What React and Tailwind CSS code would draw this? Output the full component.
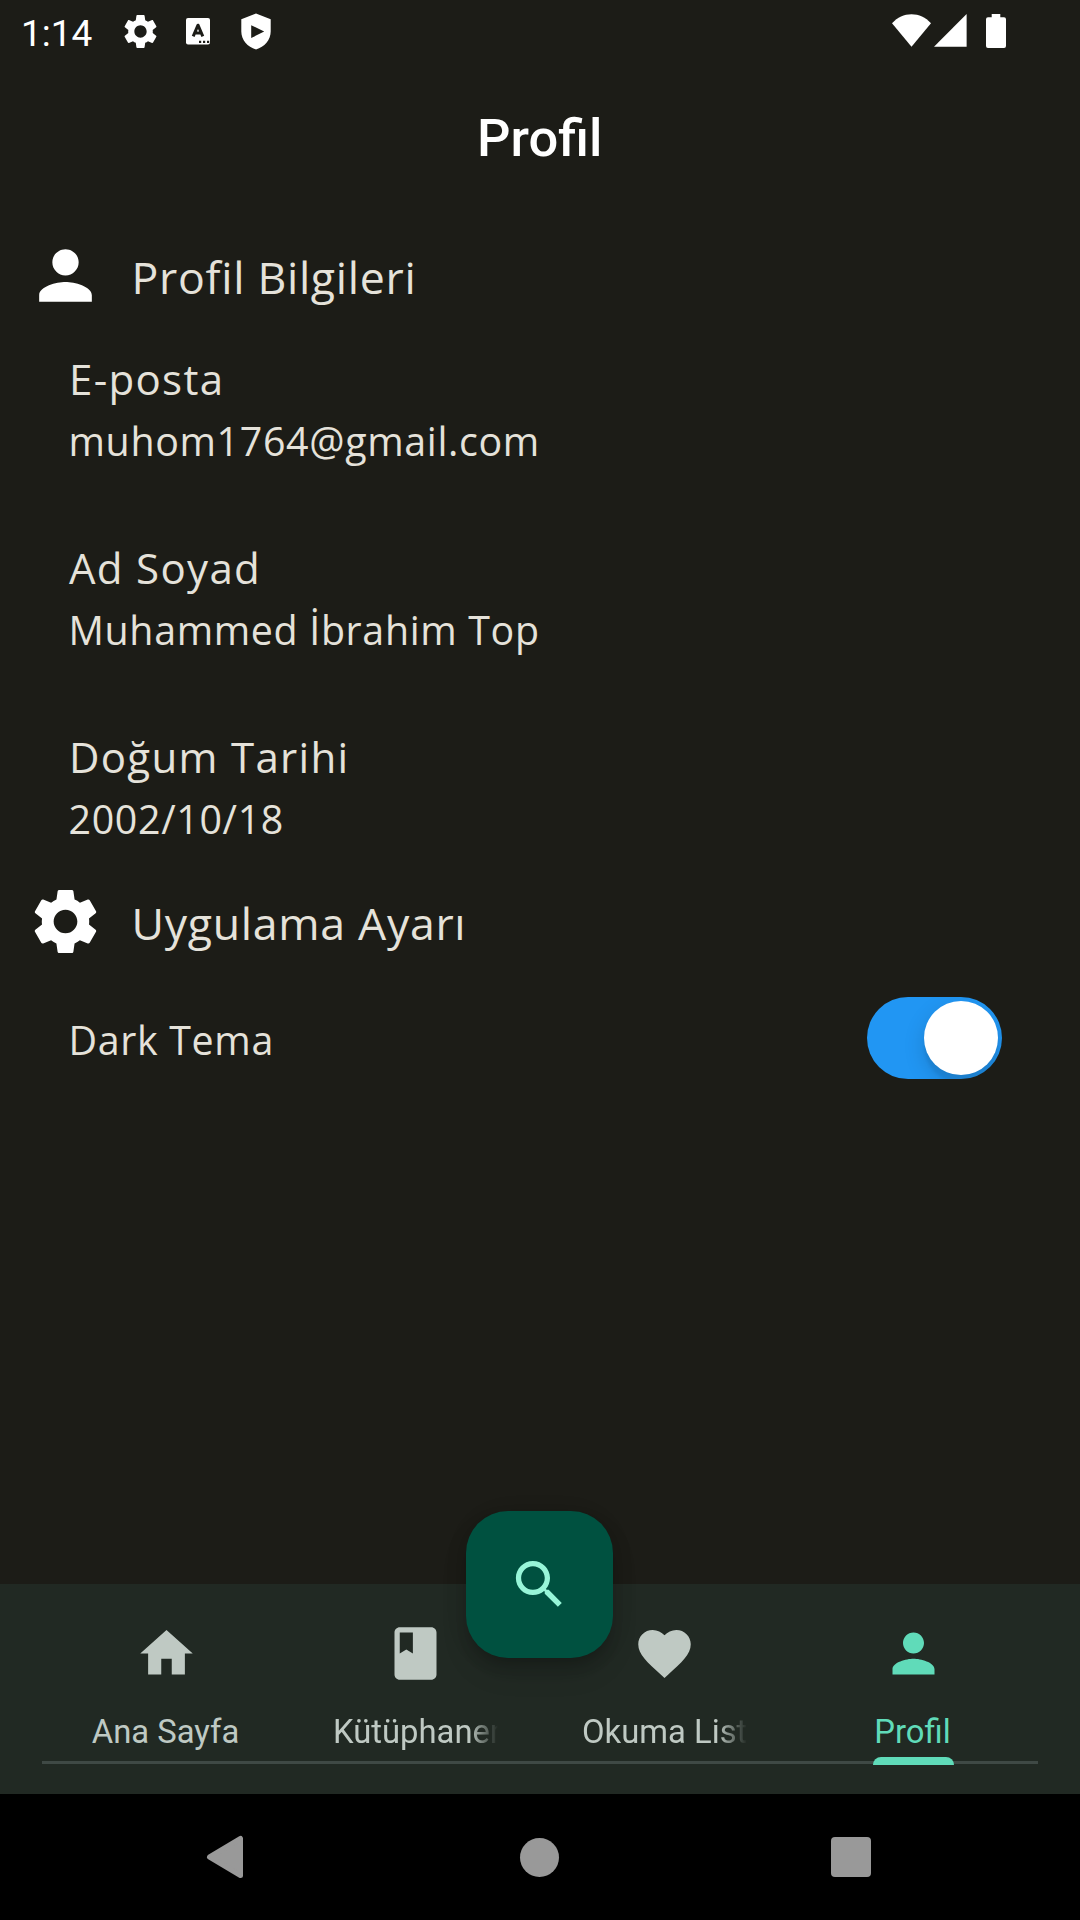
const GEAR =
  'M19.14 12.94c.04-.3.06-.61.06-.94 0-.32-.02-.64-.07-.94l2.03-1.58c.18-.14.23-.41.12-.61l-1.92-3.32c-.12-.22-.37-.29-.59-.22l-2.39.96c-.5-.38-1.03-.7-1.62-.94l-.36-2.54c-.04-.24-.24-.41-.48-.41h-3.84c-.24 0-.43.17-.47.41l-.36 2.54c-.59.24-1.13.57-1.62.94l-2.39-.96c-.22-.08-.47 0-.59.22L2.74 8.87c-.12.21-.08.47.12.61l2.03 1.58c-.05.3-.09.63-.09.94s.02.64.07.94l-2.03 1.58c-.18.14-.23.41-.12.61l1.92 3.32c.12.22.37.29.59.22l2.39-.96c.5.38 1.03.7 1.62.94l.36 2.54c.05.24.24.41.48.41h3.84c.24 0 .44-.17.47-.41l.36-2.54c.59-.24 1.13-.56 1.62-.94l2.39.96c.22.08.47 0 .59-.22l1.92-3.32c.12-.22.07-.47-.12-.61l-2.01-1.58zM12 15.6c-1.98 0-3.6-1.62-3.6-3.6s1.62-3.6 3.6-3.6 3.6 1.62 3.6 3.6-1.62 3.6-3.6 3.6z'
const PERSON =
  'M12 12c2.21 0 4-1.79 4-4s-1.79-4-4-4-4 1.79-4 4 1.79 4 4 4zm0 2c-2.67 0-8 1.34-8 4v2h16v-2c0-2.66-5.33-4-8-4z'
const HOME = 'M10 20v-6h4v6h5v-8h3L12 3 2 12h3v8z'
const BOOK =
  'M18 2H6c-1.1 0-2 .9-2 2v16c0 1.1.9 2 2 2h12c1.1 0 2-.9 2-2V4c0-1.1-.9-2-2-2zM6 4h5v8l-2.5-1.5L6 12V4z'
const HEART =
  'M12 21.35l-1.45-1.32C5.4 15.36 2 12.28 2 8.5 2 5.42 4.42 3 7.5 3c1.74 0 3.41.81 4.5 2.09C13.09 3.81 14.76 3 16.5 3 19.58 3 22 5.42 22 8.5c0 3.78-3.4 6.86-8.55 11.54L12 21.35z'
const SEARCH =
  'M15.5 14h-.79l-.28-.27C15.41 12.59 16 11.11 16 9.5 16 5.91 13.09 3 9.5 3S3 5.91 3 9.5 5.91 16 9.5 16c1.61 0 3.09-.59 4.23-1.57l.27.28v.79l5 4.99L20.49 19l-4.99-5zm-6 0C7.01 14 5 11.99 5 9.5S7.01 5 9.5 5 14 7.01 14 9.5 11.99 14 9.5 14z'

function Icon({ d, className }) {
  return (
    <svg viewBox="0 0 24 24" fill="currentColor" className={className}>
      <path d={d} />
    </svg>
  )
}

function StatusBar() {
  return (
    <div className="flex h-[63px] items-start justify-between font-[Roboto,sans-serif] text-white">
      <div className="flex items-start">
        <span className="ml-[21px] mt-[12px] w-[98.5px] text-[37px] leading-[44px]">1:14</span>
        <Icon d={GEAR} className="mt-[11px] size-[41px]" />
        <svg viewBox="0 0 24 27" className="ml-[25.5px] mt-[18px] h-[27px] w-[24px]">
          <rect width="24" height="26.5" rx="2" fill="#fff" />
          <path d="M7.2 18.3 12 7.2l4.8 11.1M8.8 15h6.4" fill="none" stroke="#1c1c17" strokeWidth="3" strokeLinejoin="round" />
          <path d="M13 22.8h2.2v2.2H13zM17 22.8h2.2v2.2H17zM21 22.8h2.2v2.2H21z" fill="#1c1c17" />
        </svg>
        <svg viewBox="0 0 30 37" className="ml-[31px] mt-[13px] h-[37px] w-[30px]">
          <path
            fill="#fff"
            fillRule="evenodd"
            d="M15 .5 29.7 6.2v12.3C29.7 27 23.5 34 15 36.5 6.5 34 .3 27 .3 18.5V6.2zM10.2 12.2v12.8l13-6.4z"
          />
        </svg>
      </div>
      <div className="mr-[74px] mt-[14px] flex items-start">
        <svg viewBox="0 0 39 33" className="h-[33px] w-[39px]">
          <path fill="#fff" d="M0 9.2C5.5 3.2 12 .2 19.5 .2S33.5 3.2 39 9.2L19.5 32.8z" />
        </svg>
        <svg viewBox="0 0 33 33" className="ml-[3px] h-[33px] w-[33px]">
          <path fill="#fff" d="M32.6 0V32.7H0z" />
        </svg>
        <svg viewBox="0 0 20 34" className="ml-[19px] h-[34px] w-[20px]">
          <path fill="#fff" d="M5.7 0h8.6v3.3H18a2 2 0 0 1 2 2V32a2 2 0 0 1-2 2H2a2 2 0 0 1-2-2V5.3a2 2 0 0 1 2-2h3.7z" />
        </svg>
      </div>
    </div>
  )
}

function SectionTitle({ icon, children }) {
  return (
    <div className="flex h-[79px] items-center pl-[26px]">
      <Icon d={icon} className="size-[79px] shrink-0 text-white" />
      <h2 className="ml-[26.5px] pt-[2px] text-[44.625px] leading-[81px] tracking-[0.7px]">{children}</h2>
    </div>
  )
}

function Field({ label, value }) {
  return (
    <div className="pl-[68.5px]">
      <div className="pl-[0.5px] text-[42px] leading-[62px] tracking-[1.3125px]">{label}</div>
      <div className="text-[39.375px] leading-[63px] tracking-[0.656px]">{value}</div>
    </div>
  )
}

function Tab({ icon, label, active, faded }) {
  return (
    <div
      className={
        'flex w-[249px] flex-col items-center ' + (active ? 'text-[#60dbb9]' : 'text-[#bfc9c3]')
      }
    >
      <Icon d={icon} className="mt-[38px] size-[63px]" />
      <div
        className={
          'mt-[26px] h-[45.5px] w-[165px] overflow-hidden whitespace-nowrap text-[32.8px] leading-[42px] ' +
          (faded
            ? 'text-left [mask-image:linear-gradient(to_right,black_calc(100%-29px),transparent)]'
            : 'pr-[2px] text-center')
        }
      >
        {label}
      </div>
      <div className={'h-[8px] w-[81px] rounded-t-[8px] ' + (active ? 'bg-[#60dbb9]' : '')} />
    </div>
  )
}

export default function App() {
  return (
    <div className="flex h-[1920px] w-[1080px] flex-col overflow-hidden bg-[#1c1c17] font-['Open_Sans',sans-serif] text-[#e5e2da]">
      <StatusBar />
      <h1 className="mt-[45px] pr-[0.5px] text-center font-[Roboto,sans-serif] text-[52.5px] font-medium leading-[60px] text-white">
        Profil
      </h1>

      <main className="mt-[68px] flex-1">
        <SectionTitle icon={PERSON}>Profil Bilgileri</SectionTitle>
        <div className="mb-[31px] mt-[33px] flex flex-col gap-[64px]">
          <Field label="E-posta" value="muhom1764@gmail.com" />
          <Field label="Ad Soyad" value="Muhammed İbrahim Top" />
          <Field label="Doğum Tarihi" value="2002/10/18" />
        </div>
        <SectionTitle icon={GEAR}>Uygulama Ayarı</SectionTitle>
        <div className="mt-[36px] flex h-[82px] items-center justify-between pl-[68.5px] pr-[78.5px]">
          <span className="pt-[5px] text-[39.375px] leading-[61px] tracking-[0.656px]">Dark Tema</span>
          <div className="flex h-[82px] w-[134.5px] items-center justify-end overflow-hidden rounded-full bg-[#2196f3] pr-[4px]">
            <div className="size-[74px] rounded-full bg-white shadow-[0_8px_21px_rgba(0,0,0,0.15),0_8px_3px_rgba(0,0,0,0.06)]" />
          </div>
        </div>
      </main>

      <div className="relative h-[210px] shrink-0 bg-[#212923] px-[42px] font-[Roboto,sans-serif]">
        <button className="absolute left-[466.4px] top-[-73.5px] flex size-[147px] items-center justify-center rounded-[42px] bg-[#005140] text-[#97f5d8] shadow-[0_8px_13px_-3px_rgba(0,0,0,0.2),0_16px_26px_rgba(0,0,0,0.12),0_3px_30px_rgba(0,0,0,0.04)]">
          <Icon d={SEARCH} className="size-[63px]" />
        </button>
        <div className="flex h-[181px] bg-[linear-gradient(#3f4945,#3f4945)] bg-[length:100%_3px] bg-[position:0_177px] bg-no-repeat">
          <Tab icon={HOME} label="Ana Sayfa" />
          <Tab icon={BOOK} label="Kütüphanem" faded />
          <Tab icon={HEART} label="Okuma Listem" faded />
          <Tab icon={PERSON} label="Profil" active />
        </div>
      </div>

      <nav className="flex h-[126px] shrink-0 items-center justify-between bg-black pl-[206px] pr-[209px]">
        <svg viewBox="0 0 38 44" className="h-[44px] w-[38px]">
          <path
            d="M34.5 3.5v37L3.5 22z"
            fill="#999"
            stroke="#999"
            strokeWidth="5"
            strokeLinejoin="round"
          />
        </svg>
        <div className="ml-[4px] size-[39px] rounded-full bg-[#999]" />
        <div className="size-[40px] rounded-[4px] bg-[#999]" />
      </nav>
    </div>
  )
}
